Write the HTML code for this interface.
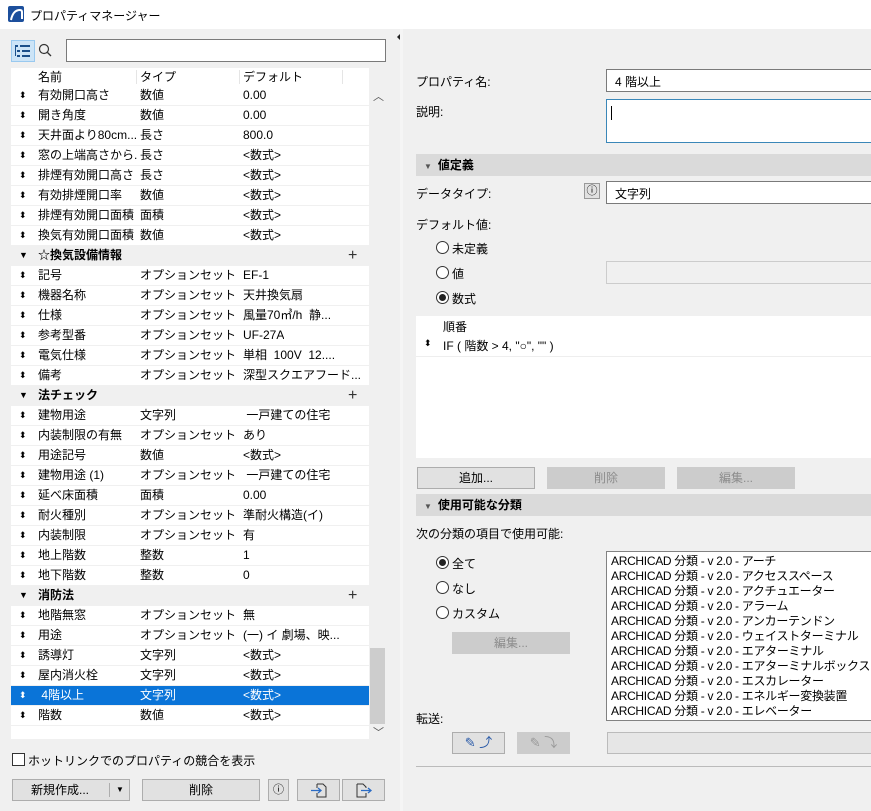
<!DOCTYPE html>
<html><head><meta charset="utf-8"><style>
*{margin:0;padding:0;box-sizing:border-box}
body{width:871px;height:811px;background:#f0f0f0;font-family:"Liberation Sans","Noto Sans CJK JP",sans-serif;font-size:12px;color:#000;position:relative;overflow:hidden}
.a{position:absolute;white-space:nowrap}
.title{left:0;top:0;width:871px;height:29px;background:#fff}
.list{left:11px;top:68px;width:358px;height:671px;background:#fff}
.row{position:absolute;left:0;width:358px;height:20px;line-height:19px;border-bottom:1px solid #f0f0f0}
.row span{position:absolute;white-space:nowrap;overflow:hidden}
.row .s{left:8px;font-size:9px}
.row .n{left:27px;max-width:100px}.row .t{left:129px;max-width:100px}.row .d{left:232px}
.g{background:#f0f0f0;font-weight:bold}
.g .pl{left:337px;font-weight:normal;font-size:16px;color:#333}
.sel{background:#0a74d8;color:#fff}
.btn{position:absolute;height:22px;border:1px solid #adadad;background:#e1e1e1;text-align:center;line-height:20px}
.dis{background:#ccc;border-color:#ccc;color:#8c8c8c}
.inp{position:absolute;background:#fff;border:1px solid #7a7a7a}
.sec{position:absolute;left:416px;width:455px;height:22px;background:#dadada;font-weight:bold;line-height:22px;padding-left:8px}
.rad{position:absolute;width:13px;height:13px;border:1px solid #333;border-radius:50%;background:#fff}
.rad.on::after{content:"";position:absolute;left:2px;top:2px;width:7px;height:7px;border-radius:50%;background:#222}
.cl{white-space:nowrap;overflow:hidden;letter-spacing:-0.3px}
</style></head><body>
<div class="a title"></div>
<svg class="a" style="left:8px;top:6px" width="16" height="16"><rect x="0" y="0" width="16" height="16" rx="2" fill="#1c4f9c"/><path d="M3 14 Q5 4 12 4 Q14 4 14 6 L14 13" stroke="#fff" stroke-width="2" fill="none"/></svg>
<div class="a" style="left:30px;top:7px">プロパティマネージャー</div>

<div class="a" style="left:11px;top:40px;width:24px;height:22px;background:#cce4f7;border:1px solid #99c9ef"></div>
<svg class="a" style="left:14px;top:44px" width="18" height="14"><g fill="#1a4f8a"><rect x="1" y="1" width="3" height="2"/><rect x="6" y="1" width="10" height="2"/><rect x="3" y="6" width="3" height="2"/><rect x="8" y="6" width="8" height="2"/><rect x="3" y="11" width="3" height="2"/><rect x="8" y="11" width="8" height="2"/><rect x="1" y="3" width="1" height="9"/></g></svg>
<svg class="a" style="left:38px;top:43px" width="14" height="14"><circle cx="6" cy="6" r="4.5" stroke="#333" fill="none" stroke-width="1.2"/><path d="M9.5 9.5 L13 13" stroke="#333" stroke-width="1.3"/></svg>
<div class="inp" style="left:66px;top:39px;width:320px;height:23px"></div>
<div class="a" style="left:397px;top:33px;width:0;height:0;border-top:4px solid transparent;border-bottom:4px solid transparent;border-right:4px solid #222"></div>

<div class="a list">
<div class="row" style="top:0;height:18px;line-height:18px;border-bottom:none"><span style="left:27px">名前</span><span style="left:129px">タイプ</span><span style="left:232px">デフォルト</span><span style="left:125px;top:2px;height:14px;border-left:1px solid #e5e5e5"></span><span style="left:228px;top:2px;height:14px;border-left:1px solid #e5e5e5"></span><span style="left:331px;top:2px;height:14px;border-left:1px solid #e5e5e5"></span></div>
<div class="row" style="top:18px"><span class="s">⬍</span><span class="n">有効開口高さ</span><span class="t">数値</span><span class="d">0.00</span></div>
<div class="row" style="top:38px"><span class="s">⬍</span><span class="n">開き角度</span><span class="t">数値</span><span class="d">0.00</span></div>
<div class="row" style="top:58px"><span class="s">⬍</span><span class="n">天井面より80cm...</span><span class="t">長さ</span><span class="d">800.0</span></div>
<div class="row" style="top:78px"><span class="s">⬍</span><span class="n">窓の上端高さから...</span><span class="t">長さ</span><span class="d">&lt;数式&gt;</span></div>
<div class="row" style="top:98px"><span class="s">⬍</span><span class="n">排煙有効開口高さ</span><span class="t">長さ</span><span class="d">&lt;数式&gt;</span></div>
<div class="row" style="top:118px"><span class="s">⬍</span><span class="n">有効排煙開口率</span><span class="t">数値</span><span class="d">&lt;数式&gt;</span></div>
<div class="row" style="top:138px"><span class="s">⬍</span><span class="n">排煙有効開口面積</span><span class="t">面積</span><span class="d">&lt;数式&gt;</span></div>
<div class="row" style="top:158px"><span class="s">⬍</span><span class="n">換気有効開口面積</span><span class="t">数値</span><span class="d">&lt;数式&gt;</span></div>
<div class="row g" style="top:178px"><span class="s">▼</span><span class="n">☆換気設備情報</span><span class="pl">+</span></div>
<div class="row" style="top:198px"><span class="s">⬍</span><span class="n">記号</span><span class="t">オプションセット</span><span class="d">EF-1</span></div>
<div class="row" style="top:218px"><span class="s">⬍</span><span class="n">機器名称</span><span class="t">オプションセット</span><span class="d">天井換気扇</span></div>
<div class="row" style="top:238px"><span class="s">⬍</span><span class="n">仕様</span><span class="t">オプションセット</span><span class="d">風量70㎥/h&nbsp; 静...</span></div>
<div class="row" style="top:258px"><span class="s">⬍</span><span class="n">参考型番</span><span class="t">オプションセット</span><span class="d">UF-27A</span></div>
<div class="row" style="top:278px"><span class="s">⬍</span><span class="n">電気仕様</span><span class="t">オプションセット</span><span class="d">単相&nbsp; 100V&nbsp; 12....</span></div>
<div class="row" style="top:298px"><span class="s">⬍</span><span class="n">備考</span><span class="t">オプションセット</span><span class="d">深型スクエアフード...</span></div>
<div class="row g" style="top:318px"><span class="s">▼</span><span class="n">法チェック</span><span class="pl">+</span></div>
<div class="row" style="top:338px"><span class="s">⬍</span><span class="n">建物用途</span><span class="t">文字列</span><span class="d">&nbsp;一戸建ての住宅</span></div>
<div class="row" style="top:358px"><span class="s">⬍</span><span class="n">内装制限の有無</span><span class="t">オプションセット</span><span class="d">あり</span></div>
<div class="row" style="top:378px"><span class="s">⬍</span><span class="n">用途記号</span><span class="t">数値</span><span class="d">&lt;数式&gt;</span></div>
<div class="row" style="top:398px"><span class="s">⬍</span><span class="n">建物用途 (1)</span><span class="t">オプションセット</span><span class="d">&nbsp;一戸建ての住宅</span></div>
<div class="row" style="top:418px"><span class="s">⬍</span><span class="n">延べ床面積</span><span class="t">面積</span><span class="d">0.00</span></div>
<div class="row" style="top:438px"><span class="s">⬍</span><span class="n">耐火種別</span><span class="t">オプションセット</span><span class="d">準耐火構造(イ)</span></div>
<div class="row" style="top:458px"><span class="s">⬍</span><span class="n">内装制限</span><span class="t">オプションセット</span><span class="d">有</span></div>
<div class="row" style="top:478px"><span class="s">⬍</span><span class="n">地上階数</span><span class="t">整数</span><span class="d">1</span></div>
<div class="row" style="top:498px"><span class="s">⬍</span><span class="n">地下階数</span><span class="t">整数</span><span class="d">0</span></div>
<div class="row g" style="top:518px"><span class="s">▼</span><span class="n">消防法</span><span class="pl">+</span></div>
<div class="row" style="top:538px"><span class="s">⬍</span><span class="n">地階無窓</span><span class="t">オプションセット</span><span class="d">無</span></div>
<div class="row" style="top:558px"><span class="s">⬍</span><span class="n">用途</span><span class="t">オプションセット</span><span class="d">(一) イ 劇場、映...</span></div>
<div class="row" style="top:578px"><span class="s">⬍</span><span class="n">誘導灯</span><span class="t">文字列</span><span class="d">&lt;数式&gt;</span></div>
<div class="row" style="top:598px"><span class="s">⬍</span><span class="n">屋内消火栓</span><span class="t">文字列</span><span class="d">&lt;数式&gt;</span></div>
<div class="row sel" style="top:618px"><span class="s">⬍</span><span class="n">&nbsp;4階以上</span><span class="t">文字列</span><span class="d">&lt;数式&gt;</span></div>
<div class="row" style="top:638px"><span class="s">⬍</span><span class="n">階数</span><span class="t">数値</span><span class="d">&lt;数式&gt;</span></div>
</div>
<div class="a" style="left:370px;top:648px;width:15px;height:76px;background:#cdcdcd"></div>
<div class="a" style="left:373px;top:88px;font-size:11px;color:#555">︿</div>
<div class="a" style="left:373px;top:724px;font-size:11px;color:#555">﹀</div>

<div class="a" style="left:12px;top:753px;width:13px;height:13px;border:1px solid #333;background:#fff"></div>
<div class="a" style="left:28px;top:752px">ホットリンクでのプロパティの競合を表示</div>
<div class="btn" style="left:12px;top:779px;width:118px;text-align:left;padding-left:18px">新規作成...<span style="position:absolute;left:96px;top:3px;height:14px;border-left:1px solid #adadad"></span><span style="position:absolute;left:103px;font-size:8px">▼</span></div>
<div class="btn" style="left:142px;top:779px;width:118px">削除</div>
<div class="btn" style="left:268px;top:779px;width:21px;font-size:11px">ⓘ</div>
<div class="btn" style="left:297px;top:779px;width:43px"><svg width="18" height="16" style="margin-top:2px"><path d="M7 2 H13 L16 5 V15 H7 V11 M7 6 V2" stroke="#333" fill="none"/><path d="M1 8.5 H11 M8 6 L11 8.5 L8 11" stroke="#2a6bc4" fill="none" stroke-width="1.3"/></svg></div>
<div class="btn" style="left:342px;top:779px;width:43px"><svg width="18" height="16" style="margin-top:2px"><path d="M2 2 H8 L11 5 V6 M11 11 V15 H2 V2" stroke="#333" fill="none"/><path d="M6 8.5 H16 M13 6 L16 8.5 L13 11" stroke="#2a6bc4" fill="none" stroke-width="1.3"/></svg></div>

<div class="a" style="left:400px;top:29px;width:3px;height:782px;background:#f5f5f5"></div>

<div class="a" style="left:416px;top:73px">プロパティ名:</div>
<div class="inp" style="left:606px;top:69px;width:270px;height:23px;padding:3px 0 0 8px">4 階以上</div>
<div class="a" style="left:416px;top:103px">説明:</div>
<div class="inp" style="left:606px;top:99px;width:270px;height:44px;border-color:#3a87b8"><div style="position:absolute;left:4px;top:6px;width:1px;height:14px;background:#000"></div></div>

<div class="sec" style="top:154px"><span style="font-size:8px;color:#555;margin-right:6px">▼</span>値定義</div>
<div class="a" style="left:416px;top:185px">データタイプ:</div>
<div class="a" style="left:584px;top:183px;width:16px;height:16px;border:1px solid #999;background:#e1e1e1;font-size:11px;text-align:center;line-height:14px">ⓘ</div>
<div class="inp" style="left:606px;top:181px;width:270px;height:23px;padding:3px 0 0 8px">文字列</div>
<div class="a" style="left:416px;top:216px">デフォルト値:</div>
<div class="rad" style="left:436px;top:241px"></div><div class="a" style="left:452px;top:240px">未定義</div>
<div class="rad" style="left:436px;top:266px"></div><div class="a" style="left:452px;top:265px">値</div>
<div class="inp" style="left:606px;top:261px;width:270px;height:23px;background:#f0f0f0;border-color:#ccc"></div>
<div class="rad on" style="left:436px;top:291px"></div><div class="a" style="left:452px;top:290px">数式</div>
<div class="a" style="left:416px;top:316px;width:455px;height:142px;background:#fff"></div>
<div class="a" style="left:443px;top:318px">順番</div>
<div class="a" style="left:424px;top:338px;font-size:9px">⬍</div>
<div class="a" style="left:443px;top:337px">IF ( 階数 &gt; 4, "○", "" )</div>
<div class="a" style="left:416px;top:356px;width:455px;height:1px;background:#eee"></div>

<div class="btn" style="left:417px;top:467px;width:118px">追加...</div>
<div class="btn dis" style="left:547px;top:467px;width:118px">削除</div>
<div class="btn dis" style="left:677px;top:467px;width:118px">編集...</div>
<div class="sec" style="top:494px"><span style="font-size:8px;color:#555;margin-right:6px">▼</span>使用可能な分類</div>
<div class="a" style="left:416px;top:525px">次の分類の項目で使用可能:</div>
<div class="rad on" style="left:436px;top:556px"></div><div class="a" style="left:452px;top:555px">全て</div>
<div class="rad" style="left:436px;top:581px"></div><div class="a" style="left:452px;top:580px">なし</div>
<div class="rad" style="left:436px;top:606px"></div><div class="a" style="left:452px;top:605px">カスタム</div>
<div class="btn dis" style="left:452px;top:632px;width:118px">編集...</div>
<div class="inp cl" style="left:606px;top:551px;width:270px;height:170px;padding:2px 0 0 4px;line-height:15px;border-color:#828282">
ARCHICAD 分類 - v 2.0 - アーチ<br>ARCHICAD 分類 - v 2.0 - アクセススペース<br>ARCHICAD 分類 - v 2.0 - アクチュエーター<br>ARCHICAD 分類 - v 2.0 - アラーム<br>ARCHICAD 分類 - v 2.0 - アンカーテンドン<br>ARCHICAD 分類 - v 2.0 - ウェイストターミナル<br>ARCHICAD 分類 - v 2.0 - エアターミナル<br>ARCHICAD 分類 - v 2.0 - エアターミナルボックス<br>ARCHICAD 分類 - v 2.0 - エスカレーター<br>ARCHICAD 分類 - v 2.0 - エネルギー変換装置<br>ARCHICAD 分類 - v 2.0 - エレベーター</div>
<div class="a" style="left:416px;top:710px">転送:</div>
<div class="btn" style="left:452px;top:732px;width:53px;font-size:13px;color:#2a5aa8">✎ ⤴</div>
<div class="btn dis" style="left:517px;top:732px;width:53px;font-size:13px;color:#999">✎ ⤵</div>
<div class="inp" style="left:607px;top:732px;width:270px;height:22px;background:#e6e6e6;border-color:#bbb"></div>
<div class="a" style="left:416px;top:766px;width:455px;height:1px;background:#bbb"></div>
</body></html>
